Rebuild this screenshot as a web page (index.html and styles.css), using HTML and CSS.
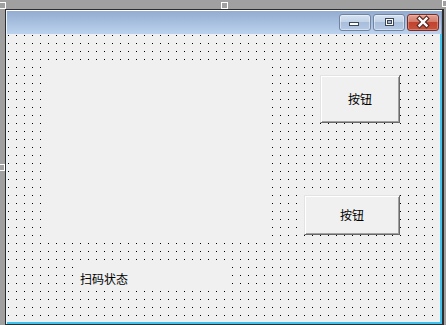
FILE: index.html
```html
<!DOCTYPE html>
<html>
<head>
<meta charset="utf-8">
<link rel="stylesheet" href="styles.css">
</head>
<body>
<div class="stage">
  <div class="form">
    <div class="frame">
      <div class="titlebar">
        <div class="caption-buttons">
          <div class="cbtn cbtn-min">
            <svg class="cicon" width="30" height="15" viewBox="0 0 30 15"><rect x="9.5" y="7.5" width="9" height="3" fill="#ffffff" stroke="#3b4656" stroke-width="1"/></svg>
          </div>
          <div class="cbtn cbtn-max">
            <svg class="cicon" width="30" height="15" viewBox="0 0 30 15"><rect x="11.5" y="3.5" width="8" height="7" fill="#ffffff" stroke="#3b4656" stroke-width="1"/><rect x="13.5" y="5.5" width="4" height="3" fill="#a9b6c6" stroke="#3b4656" stroke-width="1"/></svg>
          </div>
          <div class="cbtn cbtn-close">
            <svg class="cicon" width="30" height="15" viewBox="0 0 30 15"><g stroke-linecap="square"><path d="M11.5 3.5 L18.5 10.5 M18.5 3.5 L11.5 10.5" stroke="#5a2a24" stroke-width="4.6" fill="none"/><path d="M11.5 3.5 L18.5 10.5 M18.5 3.5 L11.5 10.5" stroke="#ffffff" stroke-width="2.4" fill="none"/></g></svg>
          </div>
        </div>
      </div>
      <div class="client">
        <div class="col-left">
          <div class="picture"></div>
          <div class="label">扫码状态</div>
        </div>
        <div class="col-right">
          <div class="button button-a">按钮</div>
          <div class="button button-b">按钮</div>
        </div>
      </div>
    </div>
  </div>
  <span class="handle h-tl"></span>
  <span class="handle h-tm"></span>
  <span class="handle h-tr"></span>
  <span class="handle h-lm"></span>
</div>
</body>
</html>
```
FILE: styles.css
```css
html, body {
  margin: 0;
  padding: 0;
}
body {
  width: 446px;
  height: 325px;
  overflow: hidden;
  background: #a0a0a0;
  font-family: "Noto Sans CJK SC", "Noto Sans", sans-serif;
  color: #000;
}
.stage {
  position: relative;
  width: 446px;
  height: 325px;
  box-sizing: border-box;
  padding: 9px 0 0 5px;
}
.form {
  width: 439px;
  height: 316px;
  box-sizing: border-box;
  border: 1px solid #2e2e2e;
  border-right-width: 2px;
}
.frame {
  height: 314px;
  box-sizing: border-box;
  border-top: 1px solid #ffffff;
  border-left: 1px solid #eaf4fb;
}
.titlebar {
  height: 23px;
  box-sizing: border-box;
  padding: 3px 3px 0 0;
  display: flex;
  justify-content: flex-end;
  align-items: flex-start;
  background: linear-gradient(#93acd0, #bcd3ee);
  box-shadow: inset -1px 0 0 #86a2c6;
}
.caption-buttons {
  display: flex;
  gap: 2px;
}
.cbtn {
  width: 32px;
  height: 17px;
  box-sizing: border-box;
  border: 1px solid #70839f;
  border-radius: 3px;
  display: flex;
  overflow: hidden;
}
.cicon {
  display: block;
}
.cbtn-min, .cbtn-max {
  background: linear-gradient(#d6e2f1 0%, #c2d3e8 45%, #a8bedb 50%, #b3c8e3 100%);
  box-shadow: inset 0 0 0 1px rgba(255, 255, 255, 0.45);
}
.cbtn-close {
  border-color: #7a2c22;
  background: linear-gradient(#e2a192 0%, #d47b6a 45%, #c1432f 50%, #c8523c 100%);
  box-shadow: inset 0 0 0 1px rgba(255, 220, 210, 0.35);
}
.client {
  height: 290px;
  box-sizing: border-box;
  border-right: 2px solid #3cc3ef;
  border-bottom: 2px solid #3cc3ef;
  background-color: #f0f0f0;
  background-image: conic-gradient(from 0deg at 1px 1px, transparent 270deg, #000000 270deg);
  background-size: 8px 8px;
  background-position: 1px 1px;
  display: flex;
  justify-content: space-between;
  align-items: flex-start;
}
.col-left {
  padding: 29px 0 0 37px;
  display: flex;
  flex-direction: column;
  align-items: flex-start;
}
.picture {
  width: 225px;
  height: 177px;
  background: #f0f0f0;
}
.label {
  margin: 23px 0 0 33px;
  width: 152px;
  height: 27px;
  box-sizing: border-box;
  padding: 9px 0 0 3px;
  background: #f0f0f0;
  font-size: 12px;
  line-height: 14px;
}
.col-right {
  padding: 41px 40px 0 0;
  display: flex;
  flex-direction: column;
  align-items: flex-end;
}
.button {
  box-sizing: border-box;
  display: flex;
  align-items: center;
  justify-content: center;
  background: #f0f0f0;
  border: 1px solid;
  border-color: #e3e3e3 #696969 #696969 #e3e3e3;
  box-shadow: inset 1px 1px 0 #ffffff, inset -1px -1px 0 #a0a0a0;
  font-size: 12px;
  line-height: 14px;
}
.button-a {
  width: 80px;
  height: 48px;
}
.button-b {
  width: 96px;
  height: 40px;
  margin-top: 72px;
}
.handle {
  position: absolute;
  width: 7px;
  height: 7px;
  box-sizing: border-box;
  border: 1px solid #ffffff;
}
.h-tl { left: -1px; top: 2px; }
.h-tm { left: 221px; top: 2px; }
.h-tr { left: 442px; top: 0; }
.h-lm { left: -2px; top: 164px; }
```
